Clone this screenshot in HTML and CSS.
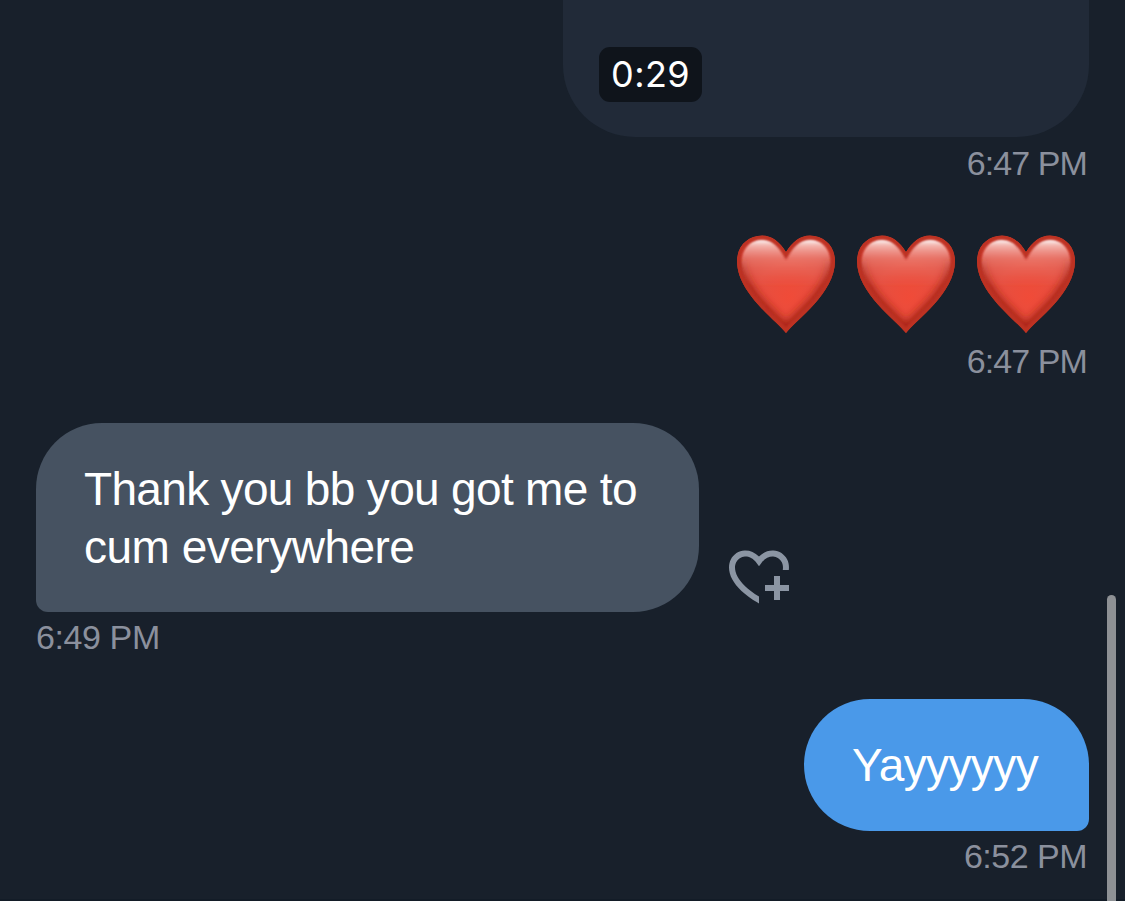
FILE: index.html
```
<!DOCTYPE html>
<html lang="en">
<head>
    <meta charset="UTF-8">
    <meta name="viewport" content="width=device-width, initial-scale=1.0">
    <title>Messages</title>
    <link rel="stylesheet" href="styles.css">
</head>
<body>
    <svg class="defs" width="0" height="0" aria-hidden="true">
        <defs>
            <path id="heartShape" d="M49 98C39 85 0 58 0 26C0 11 11 0.5 25 0.5C35 0.5 43 7 49 17C55 7 63 0.5 73 0.5C87 0.5 98 11 98 26C98 58 59 85 49 98Z"/>
            <clipPath id="heartClip"><use href="#heartShape"/></clipPath>
            <radialGradient id="heartFill" gradientUnits="userSpaceOnUse" cx="52" cy="62" r="60">
                <stop offset="0" stop-color="#f04b38"/>
                <stop offset="0.55" stop-color="#e64f40"/>
                <stop offset="1" stop-color="#d84436"/>
            </radialGradient>
            <linearGradient id="heartShine" gradientUnits="userSpaceOnUse" x1="0" y1="5" x2="0" y2="52">
                <stop offset="0" stop-color="#fff" stop-opacity="0.95"/>
                <stop offset="0.12" stop-color="#fbd8d3" stop-opacity="0.75"/>
                <stop offset="0.4" stop-color="#f0988e" stop-opacity="0.5"/>
                <stop offset="1" stop-color="#ea6a5c" stop-opacity="0"/>
            </linearGradient>
            <filter id="soft" x="-20%" y="-20%" width="140%" height="140%">
                <feGaussianBlur stdDeviation="4"/>
            </filter>
            <filter id="edge" x="-20%" y="-20%" width="140%" height="140%">
                <feGaussianBlur stdDeviation="0.8"/>
            </filter>
            <symbol id="heart" viewBox="0 0 98 98">
                <g clip-path="url(#heartClip)">
                    <use href="#heartShape" fill="url(#heartFill)"/>
                    <path d="M0 26C0 58 39 85 49 98C59 85 98 58 98 26" fill="none" stroke="#a32216" stroke-width="14" filter="url(#soft)"/>
                    <path d="M4 29C4 14 13 4 25 4C36 4 43 11 49 22C55 11 62 4 73 4C85 4 94 14 94 29C94 38 91 46 87 53H11C7 46 4 38 4 29Z" fill="url(#heartShine)" filter="url(#edge)"/>
                    <use href="#heartShape" fill="none" stroke="#bd3024" stroke-width="8" filter="url(#edge)"/>
                </g>
            </symbol>
        </defs>
    </svg>
    <main class="chat">
        <div class="message sent">
            <div class="video">
                <span class="duration">0:29</span>
            </div>
            <time class="time">6:47 PM</time>
        </div>
        <div class="message sent">
            <div class="hearts" role="img" aria-label="Three red hearts">
                <svg><use href="#heart"/></svg>
                <svg><use href="#heart"/></svg>
                <svg><use href="#heart"/></svg>
            </div>
            <time class="time">6:47 PM</time>
        </div>
        <div class="message received">
            <div class="row">
                <p class="bubble"><span class="line-one">Thank you bb you got me to</span><br><span class="line-two">cum everywhere</span></p>
                <button class="react" aria-label="Add reaction">
                    <svg viewBox="0 0 24 24"><path d="M17 12v3h-2.998v2h3v3h2v-3h3v-2h-3.001v-3H17zm-5 6.839c-3.871-2.34-6.053-4.639-7.127-6.609-1.112-2.04-1.031-3.7-.479-4.82.561-1.13 1.667-1.84 2.91-1.91 1.222-.06 2.68.51 3.892 2.16l.806 1.09.805-1.09c1.211-1.65 2.668-2.22 3.89-2.16 1.242.07 2.347.78 2.908 1.91.334.677.49 1.554.321 2.59h2.011c.153-1.283-.039-2.469-.539-3.48-.887-1.79-2.647-2.91-4.601-3.01-1.65-.09-3.367.56-4.796 2.01-1.43-1.45-3.147-2.1-4.798-2.01-1.954.1-3.714 1.22-4.601 3.01-.896 1.81-.846 4.17.514 6.67 1.353 2.48 4.003 5.12 8.382 7.67l.502.299v-2.32z"/></svg>
                </button>
            </div>
            <time class="time">6:49 PM</time>
        </div>
        <div class="message sent">
            <p class="bubble">Yayyyyyy</p>
            <time class="time last">6:52 PM</time>
        </div>
    </main>
    <div class="scrollbar"></div>
</body>
</html>
```
FILE: styles.css
```
* {
    box-sizing: border-box;
}
body {
    position: relative;
    height: 901px;
    margin: 0;
    overflow: hidden;
    color: #fff;
    background-color: #18202b;
    font-family: "Liberation Sans", Arial, sans-serif;
}
.defs {
    display: block;
}
.chat {
    height: 901px;
    padding: 0 36px;
    border-bottom: 2px solid #131c27;
}
.message {
    display: flex;
    flex-direction: column;
    align-items: flex-start;
}
.sent {
    align-items: flex-end;
}
.video {
    display: flex;
    align-items: flex-end;
    width: 526px;
    height: 137px;
    padding: 0 36px 35px;
    background-color: #212a38;
    border-radius: 0 0 72px 72px;
}
.duration {
    width: 103px;
    height: 55px;
    background-color: #0f141b;
    border-radius: 11px;
    font-family: Inter, sans-serif;
    font-size: 36px;
    line-height: 55px;
    letter-spacing: 0.4px;
    text-align: center;
}
.time {
    height: 52px;
    color: #8b909d;
    font-size: 34px;
    line-height: 52px;
    letter-spacing: -0.9px;
}
.sent .time {
    margin-right: 2px;
}
.received .time {
    line-height: 50px;
    letter-spacing: -0.4px;
}
.sent .last {
    line-height: 50px;
    letter-spacing: -0.5px;
}
.hearts {
    display: flex;
    gap: 22px;
    margin: 46px 14px 2px 0;
}
.hearts svg {
    width: 98px;
    height: 98px;
}
.received {
    margin-top: 36px;
}
.row {
    display: flex;
    align-items: flex-end;
    gap: 24px;
}
.bubble {
    margin: 0;
    padding: 37px 48px 36px;
    background-color: #465261;
    border-radius: 66px 66px 66px 12px;
    font-size: 46px;
    line-height: 58px;
    white-space: nowrap;
}
.received .bubble {
    width: 663px;
    height: 189px;
}
.line-one {
    letter-spacing: -0.67px;
}
.line-two {
    letter-spacing: -0.5px;
}
.sent .bubble {
    width: 285px;
    height: 132px;
    margin-top: 35px;
    background-color: #4a99e9;
    border-radius: 66px 66px 12px 66px;
    letter-spacing: -0.6px;
}
.react {
    width: 72px;
    height: 72px;
    padding: 0;
    border: none;
    background: none;
    color: #8b95a3;
    cursor: pointer;
}
.react svg {
    display: block;
    width: 72px;
    height: 72px;
    fill: currentColor;
}
.scrollbar {
    position: absolute;
    top: 595px;
    right: 9px;
    bottom: 0;
    width: 9px;
    background-color: #8e9195;
    border-radius: 5px 5px 0 0;
}
```
